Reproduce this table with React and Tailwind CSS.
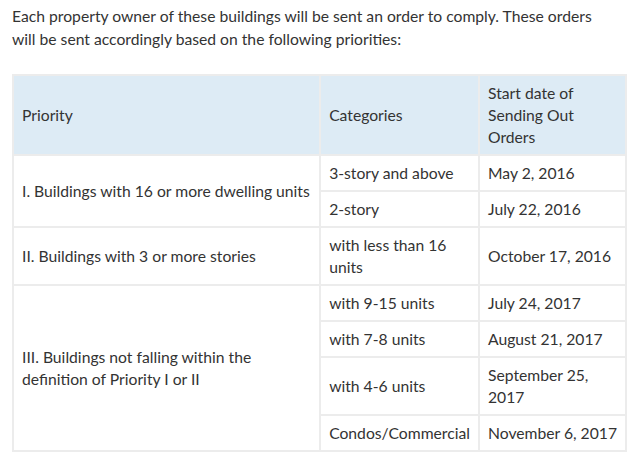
export default function App() {
  const cell = "border-2 border-[#ececec] px-2 py-[6px] align-middle";
  return (
    <div className="min-h-[463px] bg-white px-3 pt-[5px] font-['Lato',sans-serif] text-[15.7px] leading-[23px] text-[#333]">
      <p className="w-[615px]">
        Each property owner of these buildings will be sent an order to comply. These orders<br />
        will be sent accordingly based on the following priorities:
      </p>
      <table className="mt-[23px] w-[615px] border-collapse text-left leading-[22px]">
        <thead>
          <tr className="bg-[#ddebf5]">
            <th className={`${cell} w-[312px] font-normal`}>Priority</th>
            <th className={`${cell} w-[158px] font-normal`}>Categories</th>
            <th className={`${cell} font-normal`}>
              Start date of<br />Sending Out<br />Orders
            </th>
          </tr>
        </thead>
        <tbody>
          <tr>
            <td className={cell} rowSpan={2}>I. Buildings with 16 or more dwelling units</td>
            <td className={`${cell} whitespace-nowrap`}>3-story and above</td>
            <td className={cell}>May 2, 2016</td>
          </tr>
          <tr>
            <td className={cell}>2-story</td>
            <td className={cell}>July 22, 2016</td>
          </tr>
          <tr>
            <td className={cell}>II. Buildings with 3 or more stories</td>
            <td className={cell}>with less than 16<br />units</td>
            <td className={cell}>October 17, 2016</td>
          </tr>
          <tr>
            <td className={cell} rowSpan={4}>
              III. Buildings not falling within the<br />definition of Priority I or II
            </td>
            <td className={cell}>with 9-15 units</td>
            <td className={cell}>July 24, 2017</td>
          </tr>
          <tr>
            <td className={cell}>with 7-8 units</td>
            <td className={cell}>August 21, 2017</td>
          </tr>
          <tr>
            <td className={cell}>with 4-6 units</td>
            <td className={cell}>September 25,<br />2017</td>
          </tr>
          <tr>
            <td className={`${cell} whitespace-nowrap`}>Condos/Commercial</td>
            <td className={`${cell} whitespace-nowrap`}>November 6, 2017</td>
          </tr>
        </tbody>
      </table>
    </div>
  );
}
